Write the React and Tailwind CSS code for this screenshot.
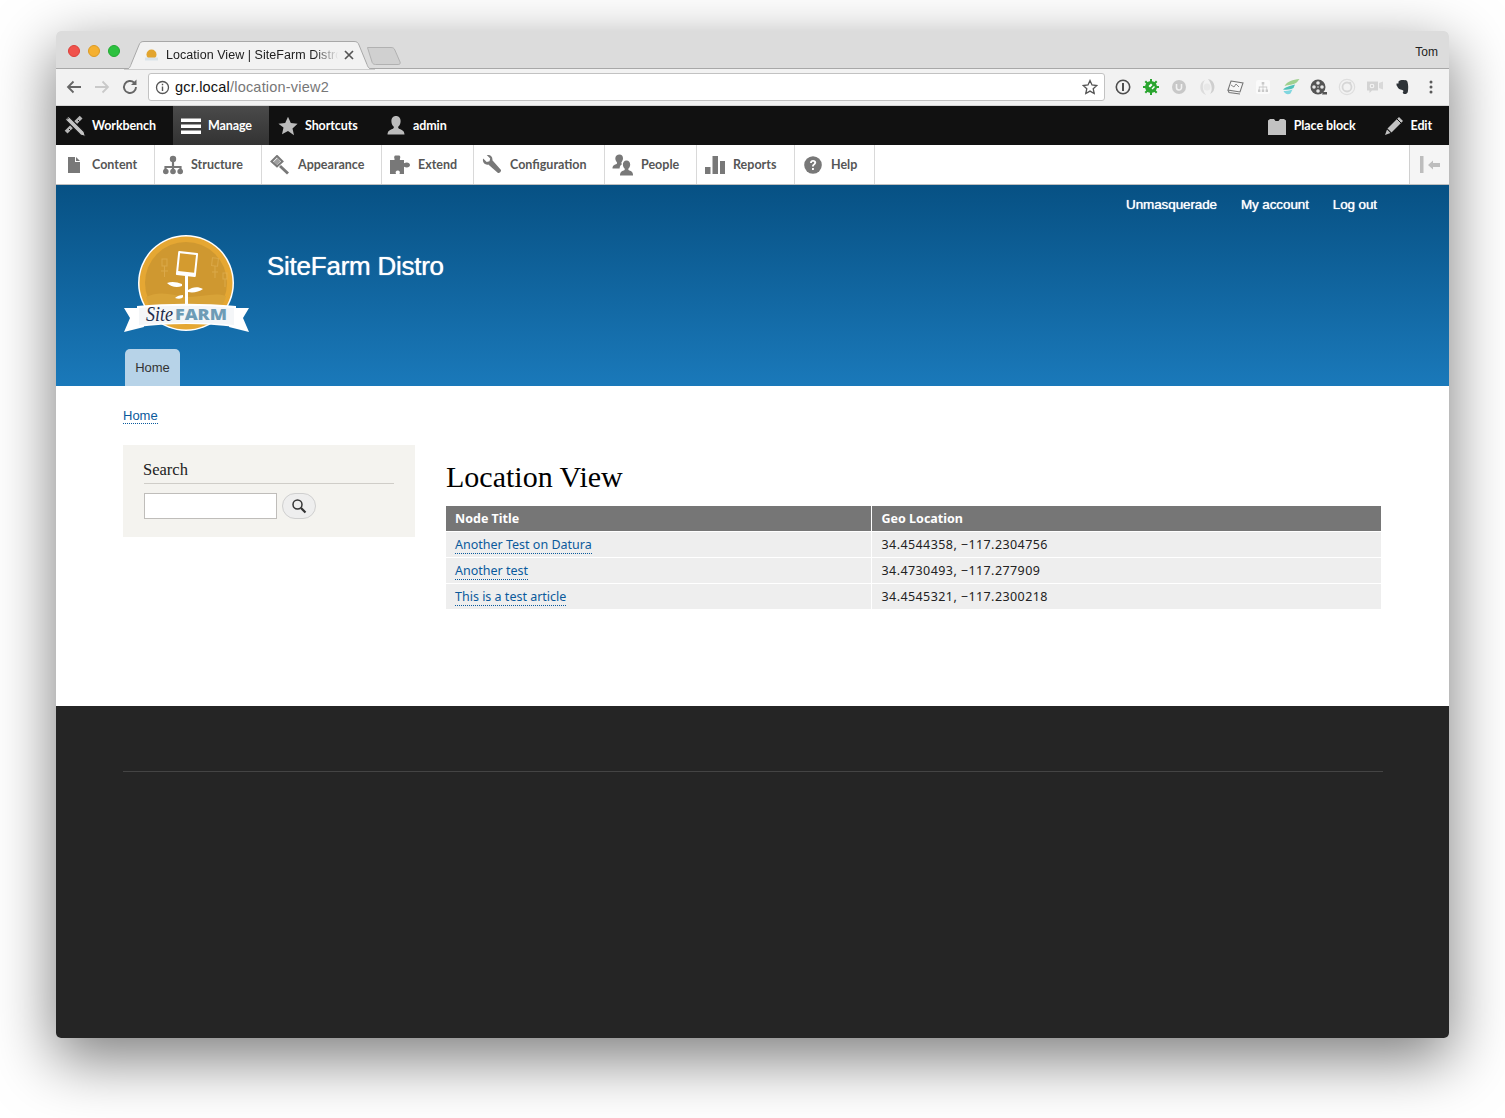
import React from "react";

const Ic = ({ s = 20, v = 20, className = "", children }) => (
  <svg width={s} height={s} viewBox={`0 0 ${v} ${v}`} className={"shrink-0 " + className}>{children}</svg>
);

const WorkbenchIcon = () => (
  <Ic s={22} v={22}>
    <path d="M3.500 18.500L18.500 3.500l-2.800-2.800L.7 15.700z" fill="#b5b5b5" />
    <path d="M5 14l1.500 1.500M8 11l1.500 1.500M11 8l1.500 1.500M14 5l1.500 1.500" stroke="#111" strokeWidth="1" />
    <path d="M1 4.500L4.500 1 20 16.500l1.500 5-5-1.500z" fill="#c4c4c4" stroke="#111" strokeWidth="1.100" />
    <path d="M5 2.500L3 4.500" stroke="#111" strokeWidth="1" />
  </Ic>
);
const MenuIcon = () => (
  <Ic>
    <path d="M0 2.500h20v3.600H0zM0 8.400h20V12H0zM0 14.400h20V18H0z" fill="#fff" />
  </Ic>
);
const StarIcon = ({ c = "#bcbcbc" }) => (
  <Ic>
    <path d="M10 .8l2.800 6.300 6.800.7-5.100 4.600 1.500 6.800L10 15l-6 3.200 1.500-6.800L.4 7.800l6.800-.7z" fill={c} />
  </Ic>
);
const UserIcon = ({ c = "#bcbcbc" }) => (
  <Ic>
    <path d="M10 0c3 0 4.600 2.200 4.600 5.200 0 2.200-1 4.600-2.400 5.600-.2 1 .2 1.700 1.300 2.200 2.600 1 4.800 1.600 5 5.600H1.500c.2-4 2.400-4.600 5-5.600 1.100-.5 1.500-1.200 1.300-2.200C6.400 9.800 5.400 7.400 5.400 5.200 5.400 2.200 7 0 10 0z" fill={c} />
  </Ic>
);
const BlockIcon = () => (
  <Ic>
    <path d="M1 4.500L3 3h4l1.500 2h3L13 3h4l2 1.500V19H1z" fill="#c2c2c2" />
  </Ic>
);
const PencilIcon = () => (
  <Ic>
    <path d="M15 1l4 4L7.500 16.500l-4-4z" fill="#c2c2c2" />
    <path d="M3 13.500l3.500 3.500-5.500 2z" fill="#c2c2c2" />
    <path d="M13 3l4 4" stroke="#111" strokeWidth="1" />
  </Ic>
);

const ContentIcon = () => (
  <Ic s={16} v={16}>
    <path d="M2 0h7v5h5v11H2z" fill="#787878" />
    <path d="M10 0l4 4h-4z" fill="#787878" />
  </Ic>
);
const StructureIcon = () => (
  <Ic>
    <path d="M10 6v6M2.500 15v-3h15v3M10 12v3" fill="none" stroke="#787878" strokeWidth="2.200" />
    <circle cx="10" cy="4" r="3.200" fill="#787878" />
    <circle cx="2.800" cy="16.500" r="2.800" fill="#787878" />
    <circle cx="10" cy="16.500" r="2.800" fill="#787878" />
    <circle cx="17.200" cy="16.500" r="2.800" fill="#787878" />
  </Ic>
);
const AppearanceIcon = () => (
  <Ic>
    <path d="M7 1l5.500 5.500-5.500 5L1.500 6.500z" fill="none" stroke="#787878" strokeWidth="2" />
    <path d="M11 10l8 7.500-2 2-8-7.500z" fill="#787878" />
    <path d="M3.500 7L7.500 3 10.500 6.500l-4 4z" fill="#787878" opacity=".7" />
  </Ic>
);
const ExtendIcon = () => (
  <Ic>
    <path d="M0 5h4.500V3.800C3.800 2.500 4.200.5 5.500.5h3.500c1.300 0 1.700 2 .9 3.300V5h4.100v3.300c2.500-1.500 6-.8 6 1.700s-3.500 3.200-6 1.700V19H9.500c1-2 0-3.500-1.700-3.500S5 17 6 19H0z" fill="#787878" />
  </Ic>
);
const WrenchIcon = () => (
  <Ic>
    <path d="M1.200 3.500L4.700 7l2.800-.7.700-2.800L4.700 0C7.500-.8 11 1.500 10.400 5.300l8.400 9.500c1.200 1.400-1.700 4.200-3.100 3L6.300 9.500C3.500 10.500-.3 7.500 1.200 3.500z" fill="#787878" />
  </Ic>
);
const PeopleIcon = () => (
  <Ic s={22} v={22}>
    <path d="M7.500 .5c2.200 0 3.500 1.700 3.500 3.800 0 1.600-.8 3.300-1.600 4.100-.1.800.1 1.100.8 1.500-1.400.8-2.600 2.200-2.600 4.700H.5c.1-3 1.600-3.500 3.500-4.300.9-.4 1.100-1 1-1.900C4.100 7.500 3.300 5.900 3.300 4.300 3.300 2.200 5.300.5 7.500.5z" fill="#787878" />
    <path d="M14.500 6.500c2.400 0 3.700 1.700 3.700 4 0 1.700-.8 3.400-1.900 4.300-.1.900.1 1.300 1.100 1.700 1.900.8 3.600 1.200 3.700 5H8c.1-3.800 1.800-4.200 3.700-5 1-.4 1.200-.8 1.100-1.700-1.100-.9-1.900-2.600-1.900-4.300 0-2.300 1.200-4 3.600-4z" fill="#787878" />
  </Ic>
);
const ReportsIcon = () => (
  <Ic>
    <path d="M0 12h5.500v7H0zM7.500 1h5.500v18H7.500zM15 6h5.500v13H15z" fill="#787878" />
  </Ic>
);
const HelpIcon = () => (
  <Ic s={18} v={18}>
    <circle cx="9" cy="9" r="8.800" fill="#787878" />
    <path d="M6 7c0-2 1.300-3 3.100-3 1.900 0 3.100 1 3.100 2.600 0 2.300-2.400 2.300-2.400 4H8c0-2.600 2.200-2.700 2.200-3.900 0-.6-.4-1-1.100-1-.8 0-1.200.5-1.200 1.300z" fill="#fff" />
    <rect x="8" y="12" width="1.900" height="2" fill="#fff" />
  </Ic>
);
const CollapseIcon = () => (
  <Ic>
    <path d="M0 1h3.500v17H0z" fill="#bdbdbd" />
    <path d="M8 10l5-4.500V8h7v4h-7v2.500z" fill="#bdbdbd" />
  </Ic>
);

const Extensions = () => {
  const box = "w-[28px] h-[28px] flex items-center justify-center";
  return (
    <div className="flex items-center ml-[4px]">
      <div className={box}>
        <Ic s={16} v={16}>
          <circle cx="8" cy="8" r="6.700" fill="none" stroke="#4d4d4d" strokeWidth="1.600" />
          <path d="M7 4h2v8H7z" fill="#4d4d4d" />
        </Ic>
      </div>
      <div className={box}>
        <Ic s={18} v={18}>
          <circle cx="9" cy="9" r="6" fill="#2aa52f" />
          <path d="M9 1v16M1 9h16M3.300 3.300l11.400 11.400M14.700 3.300L3.300 14.700" stroke="#2aa52f" strokeWidth="2" />
          <path d="M6.500 8L9 5.500 10.500 7 8 9.500zM9.500 10.500L12 8l1 1-2.500 2.500z" fill="#fff" />
        </Ic>
      </div>
      <div className={box}>
        <Ic s={16} v={16}>
          <circle cx="8" cy="8" r="7" fill="#c8c8c8" />
          <path d="M5.500 5v3.500a2.500 2.500 0 0 0 5 0V5" fill="none" stroke="#f2f2f2" strokeWidth="1.600" />
        </Ic>
      </div>
      <div className={box}>
        <Ic s={18} v={18}>
          <path d="M10 1a8 8 0 0 1 2 15c3-4 2-10-2-15z" fill="#cfcfcf" />
          <path d="M8 17A8 8 0 0 1 7 2C4 6 4 12 8 17z" fill="#dcdcdc" />
          <circle cx="9" cy="9" r="3.500" fill="#e8e8e8" />
        </Ic>
      </div>
      <div className={box}>
        <Ic s={18} v={18}>
          <path d="M5 3l12 2-3 9-12-2z" fill="#f7f7f7" stroke="#777" strokeWidth="1.100" />
          <path d="M5 7l3 2 2-3 3 3" fill="none" stroke="#8a8a8a" strokeWidth="1" />
          <path d="M2 12l1 2.500 11 1.500" fill="none" stroke="#777" strokeWidth="1.100" />
        </Ic>
      </div>
      <div className={box}>
        <Ic s={16} v={16}>
          <rect x="1" y="1" width="14" height="14" rx="2.500" fill="#fafafa" />
          <path d="M6.700 3h2.600v2.600H6.700zM3 10.500h2.400V13H3zM6.800 10.500h2.400V13H6.800zM10.600 10.500H13V13h-2.400zM7.600 5.600h.8v2h3.800v3h-.8V8.400H8.400v2.100h-.8V8.400H4.600v2.100h-.8v-3h3.800z" fill="#c9c9c9" />
        </Ic>
      </div>
      <div className={box}>
        <Ic s={18} v={18}>
          <path d="M17.500 1C11 1.500 5 3.500 2.500 8c4-1 9-1.500 11.500-3 1.200-1 2.500-2.500 3.500-4z" fill="#9fd08f" />
          <path d="M13 6.500C8 8 3 9 1 11.500c4 .5 8 0 10.500-1.500z" fill="#4fc1b9" />
          <path d="M10.500 11.500C7 12.500 4 13 1.500 13c1 3 4.500 4 7 2.500z" fill="#7fd6df" />
        </Ic>
      </div>
      <div className={box}>
        <Ic s={18} v={18}>
          <circle cx="8" cy="9" r="7.500" fill="#555" />
          <path d="M13 14h4v2.500h-5z" fill="#555" />
          <circle cx="8" cy="5" r="1.800" fill="#e8e8e8" />
          <circle cx="8" cy="13" r="1.800" fill="#e8e8e8" />
          <circle cx="4" cy="9" r="1.800" fill="#e8e8e8" />
          <circle cx="12" cy="9" r="1.800" fill="#e8e8e8" />
          <circle cx="8" cy="9" r=".8" fill="#e8e8e8" />
        </Ic>
      </div>
      <div className={box}>
        <Ic s={18} v={18}>
          <circle cx="9" cy="9" r="7.700" fill="none" stroke="#dedede" strokeWidth="1.200" />
          <circle cx="9" cy="9" r="4.500" fill="none" stroke="#d6d6d6" strokeWidth="1.800" />
          <circle cx="12" cy="5" r="1.300" fill="#d6d6d6" />
        </Ic>
      </div>
      <div className={box}>
        <Ic s={18} v={18}>
          <path d="M1 3.500h11v9H6L3.500 15v-2.500H1z" fill="#d3d3d3" />
          <path d="M13 5l4-1.500v8L13 10z" fill="#d9d9d9" />
          <circle cx="6" cy="8" r="1.800" fill="none" stroke="#f5f5f5" strokeWidth="1.100" />
        </Ic>
      </div>
      <div className={box}>
        <Ic s={16} v={16}>
          <path d="M3.500 2.500C5 1 7.500 1 9.500 1.200 10.500 .8 12 1.500 12.500 3c1 3 .8 7 .3 10-.3 1.800-3 2.500-4.300 1.700-1-.7-1-2.200.2-2.400-.6-1-2-1.400-3.200-1.700C3.500 10 2.500 8 1.500 6.200V4.500h2z" fill="#2e3338" />
        </Ic>
      </div>
      <div className={box}>
        <Ic s={16} v={16}>
          <circle cx="8" cy="3" r="1.500" fill="#5a5a5a" />
          <circle cx="8" cy="8" r="1.500" fill="#5a5a5a" />
          <circle cx="8" cy="13" r="1.500" fill="#5a5a5a" />
        </Ic>
      </div>
    </div>
  );
};

const Logo = () => (
  <svg width="125" height="100" viewBox="0 0 125 100" className="shrink-0 ml-[1px]">
    <circle cx="62" cy="48" r="48" fill="#fff" />
    <circle cx="62" cy="48" r="46.500" fill="#e5a733" />
    <circle cx="62" cy="48" r="41" fill="#cf9830" />
    <path d="M22 62c14-7 26-2 40 0 14 1 26-5 40-1-4 16-20 28-40 28S26 78 22 62z" fill="#d8a338" />
    <g fill="none" stroke="#e2b45a" strokeWidth="1" opacity=".6">
      <rect x="38" y="24" width="5" height="7" />
      <path d="M40.500 31v11M37 36h7" />
      <rect x="88" y="23" width="6" height="8" transform="rotate(6 91 27)" />
      <path d="M91 31v12M88 37h6" />
      <rect x="99" y="38" width="4" height="6" />
      <path d="M101 44v8" />
    </g>
    <g transform="rotate(6 63 29)">
      <rect x="53" y="17" width="20" height="24" rx="1" fill="#fff" />
      <rect x="55" y="19" width="16" height="18" fill="#d49b2f" />
    </g>
    <path d="M61 41h3v30h-3z" fill="#fff" />
    <path d="M58 49c-5-2-10-3-15-1 4 4 10 5 15 3zM64 55c4-3 10-4 15-1-4 3-10 4-15 3zM59 60c-3 0-6 1-8 3 3 1 7 1 8-1z" fill="#fff" />
    <path d="M16 73L0 73l6 10-6 14 20-5z" fill="#fff" />
    <path d="M109 73l16 0-6 10 6 14-20-5z" fill="#fff" />
    <path d="M13 71c32-3 66-3 99 0v21c-33-4-67-4-99 0z" fill="#fff" />
    <path d="M15 73c30-3 63-3 95 0v17c-32-3-63-3-95 0z" fill="#f4f6f8" />
    <text x="22" y="86" fontFamily="'Liberation Serif', serif" fontStyle="italic" fontSize="21" textLength="27" lengthAdjust="spacingAndGlyphs" fill="#1e2b4a">Site</text>
    <text x="51" y="85" fontFamily="'Open Sans', sans-serif" fontWeight="800" fontSize="16" textLength="52" lengthAdjust="spacingAndGlyphs" fill="#6e9cb6">FARM</text>
  </svg>
);

const trayItems = [
  ["Content", ContentIcon, "w-[99px]"],
  ["Structure", StructureIcon, "w-[107px]"],
  ["Appearance", AppearanceIcon, "w-[120px]"],
  ["Extend", ExtendIcon, "w-[92px]"],
  ["Configuration", WrenchIcon, "w-[131px]"],
  ["People", PeopleIcon, "w-[92px]"],
  ["Reports", ReportsIcon, "w-[98px]"],
  ["Help", HelpIcon, "w-[80px]"],
];

const rows = [
  ["Another Test on Datura", "34.4544358, -117.2304756"],
  ["Another test", "34.4730493, -117.277909"],
  ["This is a test article", "34.4545321, -117.2300218"],
];

const uiFont = "font-['Lato',sans-serif]";

function BarItem({ icon, label, className = "" }) {
  return (
    <div className={"flex items-center h-full " + className}>
      <span className="w-[20px] h-[20px] flex items-center justify-center">{icon}</span>
      <span className="ml-[7px] pt-[2px] text-[12.500px] font-bold text-white tracking-[-0.1px]">{label}</span>
    </div>
  );
}

export default function App() {
  return (
    <div className="w-[1505px] h-[1118px] overflow-hidden bg-white pl-[56px] pt-[31px] font-['Liberation_Sans',sans-serif]">
      <div className="w-[1393px] h-[1007px] rounded-[5px] overflow-hidden flex flex-col shadow-[0_20px_60px_2px_rgba(0,0,0,0.5)]">
        {/* Tab strip */}
        <div className="h-[38px] bg-[#dcdcdc] border-b border-[#a8a8a8] flex items-end relative shrink-0">
          <div className="flex items-center gap-[8px] pl-[12px] self-start pt-[14px]">
            <span className="w-[12px] h-[12px] rounded-full bg-[#f0524c] border border-[#dc3f39]" />
            <span className="w-[12px] h-[12px] rounded-full bg-[#f5b030] border border-[#dc9a23]" />
            <span className="w-[12px] h-[12px] rounded-full bg-[#2cc13f] border border-[#22a932]" />
          </div>
          <div className="relative w-[251px] h-[28px] ml-[4px] -mb-px shrink-0 flex items-center">
            <svg width="251" height="29" viewBox="0 0 251 29" className="absolute left-0 top-0">
              <path d="M0 28.500c5 0 6-2 7-5L15 4c1-2.500 2-3.500 5-3.500h210c3 0 4 1 5 3.500l8 19.500c1 3 2 5 8 5z" fill="#f2f2f2" stroke="#a8a8a8" />
              <path d="M0 29h251" stroke="#f2f2f2" />
            </svg>
            <span className="relative ml-[21px] w-[13px] h-[13px] flex items-center justify-center">
              <svg width="13" height="13" viewBox="0 0 13 13">
                <circle cx="6.500" cy="5.500" r="5" fill="#e2a52f" />
                <path d="M0 8.500h13v3H0z" fill="#d9e3ea" />
              </svg>
            </span>
            <span className="relative ml-[8px] w-[176px] overflow-hidden whitespace-nowrap text-[12.500px] leading-[16px] tracking-[0.05px] text-[#222] [mask-image:linear-gradient(to_right,#000_84%,transparent_98%)]">
              Location View | SiteFarm Distro
            </span>
            <svg width="10" height="10" viewBox="0 0 10 10" className="relative ml-[2px]">
              <path d="M1 1l8 8M9 1l-8 8" stroke="#555" strokeWidth="1.700" />
            </svg>
          </div>
          <svg width="34" height="18" viewBox="0 0 36 18" preserveAspectRatio="none" className="ml-[-8px] mb-[3px] shrink-0">
            <path d="M.5.500h25c2 0 3 .5 4 2.500l5.500 12c.5 1.500 0 2.500-2 2.500H9c-2 0-3-1-3.500-2z" fill="#d0d0d0" stroke="#b0b0b0" />
          </svg>
          <span className="absolute right-[11px] top-[13px] text-[12px] leading-[16px] text-[#222]">Tom</span>
        </div>

        {/* URL toolbar */}
        <div className="h-[37px] bg-[#f2f2f2] flex items-center shrink-0 pl-[9px] border-b border-[#d6d6d6]">
          <svg width="18" height="18" viewBox="0 0 18 18" className="shrink-0">
            <path d="M16 9H3M8.500 3.500L3 9l5.500 5.500" fill="none" stroke="#666" strokeWidth="1.800" />
          </svg>
          <svg width="18" height="18" viewBox="0 0 18 18" className="shrink-0 ml-[10px]">
            <path d="M2 9h13M9.500 3.500L15 9l-5.500 5.500" fill="none" stroke="#c9c9c9" strokeWidth="1.800" />
          </svg>
          <svg width="18" height="18" viewBox="0 0 18 18" className="shrink-0 ml-[10px]">
            <path d="M15 9a6 6 0 1 1-1.800-4.300" fill="none" stroke="#666" strokeWidth="1.900" />
            <path d="M15.500 1.500v5.500H10z" fill="#666" />
          </svg>
          <div className="ml-[9px] w-[957px] h-[28px] bg-white rounded-[3px] border border-[#c2c2c2] flex items-center pl-[6px] pr-[6px]">
            <svg width="15" height="15" viewBox="0 0 15 15" className="shrink-0">
              <circle cx="7.500" cy="7.500" r="6" fill="none" stroke="#555" strokeWidth="1.300" />
              <path d="M6.800 6.500h1.400v4.500H6.800zM6.800 3.800h1.400v1.500H6.800z" fill="#555" />
            </svg>
            <span className="ml-[5px] text-[14.500px] leading-[20px] tracking-[0.2px] text-[#111]">
              gcr.local<span className="text-[#777]">/location-view2</span>
            </span>
            <svg width="16" height="16" viewBox="0 0 16 16" className="ml-auto shrink-0">
              <path d="M8 1.500l2 4.500 4.800.5-3.600 3.200 1 4.800L8 12.100l-4.200 2.400 1-4.800L1.200 6.500 6 6z" fill="none" stroke="#555" strokeWidth="1.300" />
            </svg>
          </div>
          <Extensions />
        </div>

        {/* Admin bar */}
        <div className={"h-[39px] bg-[#111] flex items-center shrink-0 " + uiFont}>
          <BarItem icon={<WorkbenchIcon />} label="Workbench" className="pl-[9px] w-[117px]" />
          <BarItem
            icon={<MenuIcon />}
            label="Manage"
            className="pl-[8px] w-[96px] bg-gradient-to-b from-[#4a4a4a] to-[#333]"
          />
          <BarItem icon={<StarIcon />} label="Shortcuts" className="pl-[9px] w-[108px]" />
          <BarItem icon={<UserIcon />} label="admin" className="pl-[9px]" />
          <BarItem icon={<BlockIcon />} label="Place block" className="ml-auto" />
          <BarItem icon={<PencilIcon />} label="Edit" className="ml-[28px] mr-[17px]" />
        </div>

        {/* Tray */}
        <div className={"h-[40px] bg-white border-b border-[#bfbfbf] flex shrink-0 " + uiFont}>
          {trayItems.map(([label, Icon, w]) => (
            <div key={label} className={"h-full border-r border-[#d9d9d9] flex items-center " + w}>
              <span className="w-[36px] flex justify-center">
                <Icon />
              </span>
              <span className="pt-[2px] text-[12.500px] font-bold text-[#565656]">{label}</span>
            </div>
          ))}
          <div className="ml-auto w-[40px] h-full bg-[#f5f5f5] border-l border-[#d0d0d0] flex items-center justify-center">
            <CollapseIcon />
          </div>
        </div>

        {/* Site header */}
        <div className="h-[201px] bg-gradient-to-b from-[#075184] to-[#1a79ba] shrink-0 flex flex-col pl-[67px] pr-[72px]">
          <div className="flex justify-end gap-[24px] pt-[11px] text-[13.500px] leading-[17px] text-white tracking-[-0.12px] [text-shadow:0_0_1px_#fff]">
            <span>Unmasquerade</span>
            <span>My account</span>
            <span>Log out</span>
          </div>
          <div className="flex mt-[22px]">
            <div className="w-[144px]">
              <Logo />
            </div>
            <div className="text-[26px] leading-[30px] text-white tracking-[-0.25px] mt-[16px] [text-shadow:0_0_1px_#fff]">SiteFarm Distro</div>
          </div>
          <div className="mt-auto ml-[2px] w-[55px] h-[37px] bg-[#b7d3e8] rounded-t-[5px] flex items-center justify-center text-[13px] text-[#333]">
            Home
          </div>
        </div>

        {/* Main */}
        <div className="h-[320px] bg-white shrink-0 pl-[67px]">
          <div className="pt-[21px] h-[59px] text-[13px] leading-[17px]">
            <span className="text-[#0b5a9c] border-b border-dotted border-[#0b5a9c]">Home</span>
          </div>
          <div className="flex">
            <div className="w-[292px] h-[92px] bg-[#f4f3ef] pl-[21px] pt-[14px]">
              <div className="w-[250px] h-[25px] border-b border-[#cfcdc8] font-['Liberation_Serif',serif] text-[16.500px] leading-[21px] text-[#222] -indent-[1px]">
                Search
              </div>
              <div className="flex mt-[9px] gap-[5px]">
                <div className="w-[133px] h-[26px] bg-white border border-[#bfbdba]" />
                <div className="w-[34px] h-[26px] rounded-[13px] bg-[#eeeeee] border border-[#cfcfcf] flex items-center justify-center">
                  <svg width="16" height="16" viewBox="0 0 16 16">
                    <circle cx="6.500" cy="6.500" r="4.500" fill="none" stroke="#333" strokeWidth="1.500" />
                    <path d="M10 10l4.500 4.500" stroke="#333" strokeWidth="2.200" />
                  </svg>
                </div>
              </div>
            </div>
            <div className="ml-[31px] w-[935px]">
              <h1 className="font-['Liberation_Serif',serif] text-[30px] leading-[36px] text-black mt-[14px] mb-[11px]">
                Location View
              </h1>
              <table className="w-[935px] border-collapse table-fixed font-['Noto_Sans',sans-serif] text-[12.500px]">
                <colgroup>
                  <col className="w-[425px]" />
                  <col />
                </colgroup>
                <thead>
                  <tr className="h-[25px] bg-[#767676] text-white font-bold text-left">
                    <th className="pl-[9px] pt-[2px] border-r border-white font-bold">Node Title</th>
                    <th className="pl-[10px] pt-[2px] font-bold">Geo Location</th>
                  </tr>
                </thead>
                <tbody>
                  {rows.map(([t, g]) => (
                    <tr key={t} className="h-[26px] bg-[#eeeeee] border-t border-white">
                      <td className="pl-[9px] pt-[2px] border-r border-white">
                        <span className="text-[#0b5a9c] border-b border-dotted border-[#0b5a9c]">{t}</span>
                      </td>
                      <td className="pl-[10px] pt-[2px] text-[#222] tracking-[0.42px]">{g.replace(", -", ", −")}</td>
                    </tr>
                  ))}
                </tbody>
              </table>
            </div>
          </div>
        </div>

        {/* Footer */}
        <div className="grow bg-[#252525] pt-[65px] pl-[67px]">
          <div className="w-[1260px] border-t border-[#444]" />
        </div>
      </div>
    </div>
  );
}
